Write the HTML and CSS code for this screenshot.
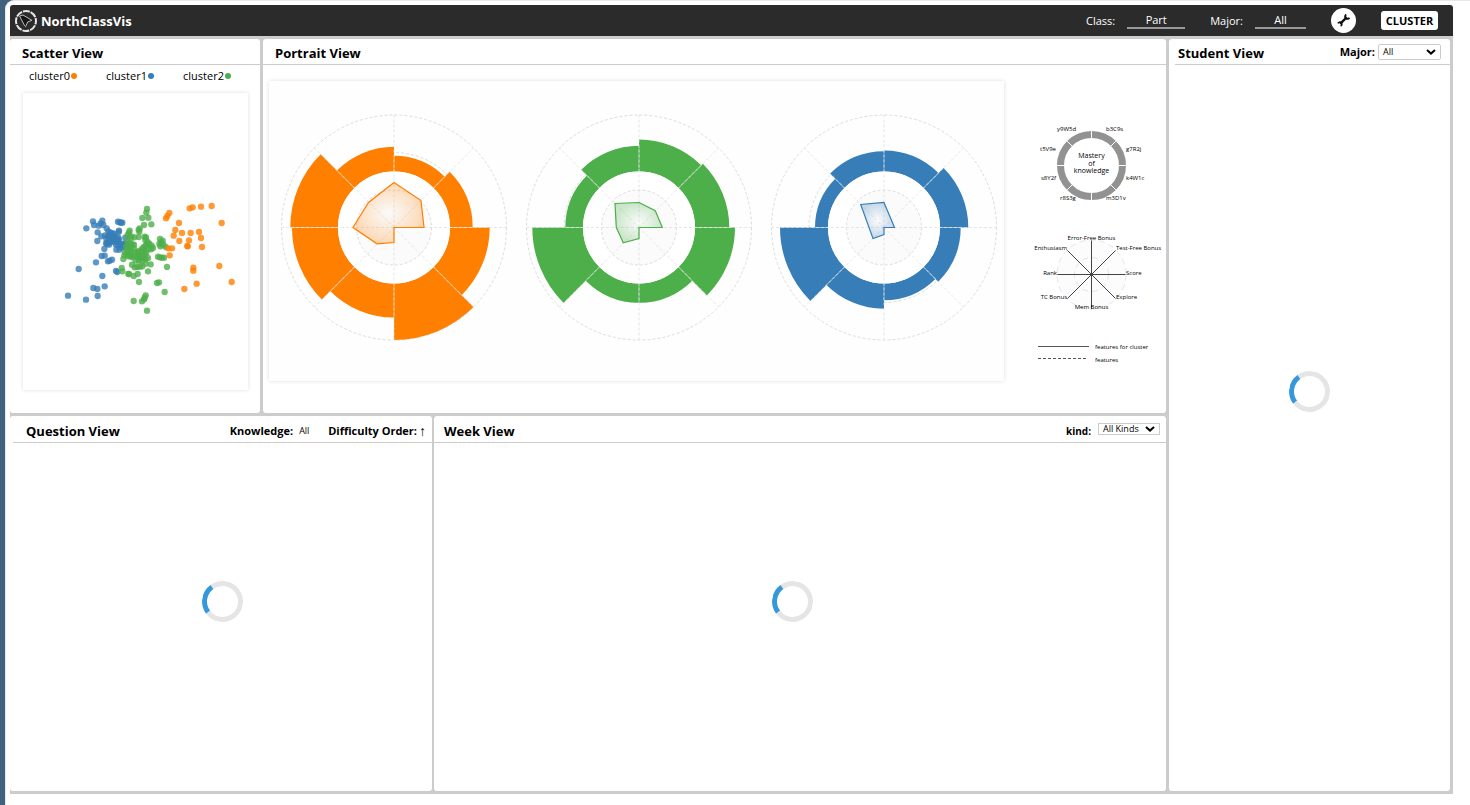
FILE: index.html
```html
<!DOCTYPE html>
<html lang="en">
<head>
<meta charset="utf-8">
<title>NorthClassVis</title>
<link rel="stylesheet" href="styles.css">
</head>
<body>
<div class="window">
  <header class="topbar">
    <svg class="logo" viewBox="0 0 24 24" aria-hidden="true">
      <circle cx="12" cy="12" r="10" fill="none" stroke="#e6e6e6" stroke-width="2" stroke-dasharray="6.9 0.954" stroke-dashoffset="3.4"/>
      <path d="M5.6 7 9 6 18 11.4 13.8 12.8 11.6 17.6 10.6 16.8Z" fill="#151515" stroke="#bbb" stroke-width="1" stroke-linejoin="round"/>
    </svg>
    <h1 class="brand">NorthClassVis</h1>
    <label class="bar-label" for="class">Class:</label>
    <select class="bar-select bar-select-wide" id="class"><option>Part</option></select>
    <label class="bar-label" for="major">Major:</label>
    <select class="bar-select" id="major"><option>All</option></select>
    <button class="tool" type="button" aria-label="Settings">
      <svg viewBox="0 0 24 24" aria-hidden="true" fill="none" stroke="#111">
        <path d="M6.5 17.5 17.5 6.5" stroke-width="3.8"/>
        <path d="M16.4 2.6A3.7 3.7 0 1 0 21.4 7.6" stroke-width="2.8"/>
        <path d="M7.4 20.8A3.2 3.2 0 1 0 3.2 16.6" stroke-width="2.6"/>
      </svg>
    </button>
    <button class="cluster-btn" type="button">CLUSTER</button>
  </header>

  <main class="board">
    <div class="left">
      <div class="row row-top">
        <section class="panel scatter">
          <div class="head"><h2>Scatter View</h2></div>
          <ul class="legend">
            <li>cluster0<i class="dot orange"></i></li>
            <li>cluster1<i class="dot blue"></i></li>
            <li>cluster2<i class="dot green"></i></li>
          </ul>
          <svg class="card" id="scatter" viewBox="-96 -306 675 891"></svg>
        </section>
        <section class="panel portrait">
          <div class="head"><h2>Portrait View</h2></div>
          <div class="charts">
            <svg class="card roses" id="roses" viewBox="0 0 735 300"></svg>
            <svg class="guide" viewBox="0 0 162 300">
              <circle cx="87.5" cy="84.5" r="31" fill="none" stroke="#929292" stroke-width="7"/>
              <g stroke="#fff" id="ring-gaps"></g>
              <g class="guide-title">
                <text x="87.5" y="77">Mastery</text><text x="87.5" y="85">of</text><text x="87.5" y="92">knowledge</text>
              </g>
              <g class="guide-text">
                <text x="53" y="50">y9W5d</text><text x="102" y="50">b3C9s</text>
                <text x="36" y="70">t5V9e</text><text x="122" y="70">g7R2j</text>
                <text x="37" y="99">s8Y2f</text><text x="122" y="99">k4W1c</text>
                <text x="56" y="119">r8S3g</text><text x="102" y="119">m3D1v</text>
              </g>
              <g fill="none" stroke="#d8d8d8" stroke-width="0.7" stroke-dasharray="6 4">
                <circle cx="87.5" cy="193.5" r="34.5" fill="#fcfcfc"/><circle cx="87.5" cy="193.5" r="17"/>
              </g>
              <g stroke="#444" id="spokes"></g>
              <g class="guide-text">
                <text class="mid" x="87.5" y="159">Error-Free Bonus</text>
                <text class="end" x="63" y="169">Enthusiasm</text><text x="112" y="169">Test-Free Bonus</text>
                <text class="end" x="53" y="194">Rank</text><text x="122" y="194">Score</text>
                <text class="end" x="63" y="218">TC Bonus</text><text x="112" y="218">Explore</text>
                <text class="mid" x="87.5" y="228">Mem Bonus</text>
                <text x="91" y="268">features for cluster</text><text x="91" y="281">features</text>
              </g>
              <path d="M34 265.5H85" stroke="#555"/>
              <path d="M34 277.5H83" stroke="#555" stroke-dasharray="3 2"/>
            </svg>
          </div>
        </section>
      </div>
      <div class="row row-bottom">
        <section class="panel question">
          <div class="head">
            <h2>Question View</h2>
            <label class="small-label" for="knowledge">Knowledge:</label>
            <select class="plain-select" id="knowledge"><option>All</option></select>
            <span class="small-label">Difficulty Order:</span>
            <button class="order" type="button" aria-label="Ascending">↑</button>
          </div>
          <div class="loading"><div class="spinner"></div></div>
        </section>
        <section class="panel week">
          <div class="head">
            <h2>Week View</h2>
            <label class="tiny-label" for="kind">kind:</label>
            <select class="box-select kind-select" id="kind"><option>All Kinds</option></select>
          </div>
          <div class="loading"><div class="spinner"></div></div>
        </section>
      </div>
    </div>
    <section class="panel student">
      <div class="head">
        <h2>Student View</h2>
        <label class="major-label" for="student-major">Major:</label>
        <select class="box-select major-select" id="student-major"><option>All</option></select>
      </div>
      <div class="loading"><div class="spinner"></div></div>
    </section>
  </main>
</div>
<script src="charts.js"></script>
</body>
</html>
```
FILE: styles.css
```css
* { box-sizing: border-box; }
body {
  margin: 0;
  background: #40627f;
  color: #000;
  font-family: "Open Sans", "Noto Sans", sans-serif;
  font-size: 12px;
}
h1, h2, ul { margin: 0; padding: 0; }
button, select { font-family: inherit; margin: 0; }

.window {
  display: flex;
  flex-direction: column;
  min-height: 100vh;
  margin-left: 5px;
  padding: 4px 17px 11px 4px;
  background: #fff;
  border-top: 1px solid #e3e9ee;
  border-left: 1px solid #e3e9ee;
  border-top-left-radius: 9px;
}

.topbar {
  display: flex;
  align-items: center;
  height: 31px;
  padding: 0 15px 0 4px;
  background: #2b2b2b;
  color: #fff;
  border-radius: 3px 3px 0 0;
}
.logo { width: 24px; height: 24px; margin-right: 3px; }
.brand { margin-right: auto; font-size: 13px; line-height: 20px; }
.bar-label { font-size: 11px; line-height: 20px; }
.bar-select {
  appearance: none;
  width: 51px;
  height: 16px;
  margin: 0 25px 0 12px;
  padding: 0;
  border: 0;
  border-bottom: 2px solid #999;
  background: none;
  color: #fff;
  font-size: 11px;
  line-height: 14px;
  text-align: center;
  text-align-last: center;
}
.bar-select-wide { width: 58px; }
.tool {
  width: 25px;
  height: 25px;
  margin-right: 25px;
  padding: 5px;
  border: 0;
  border-radius: 50%;
  background: #fff;
}
.tool svg { display: block; width: 15px; height: 15px; }
.cluster-btn {
  width: 57px;
  height: 19px;
  padding: 0;
  border: 0;
  border-radius: 3px;
  background: #fff;
  color: #000;
  font-size: 11px;
  font-weight: 700;
  line-height: 19px;
}

.board {
  flex: 1;
  display: grid;
  grid-template-columns: 1156fr 281fr;
  gap: 3px;
  padding: 3px 3px 3px 0;
  background: #ccc;
}
.left { display: grid; grid-template-rows: 374fr 375fr; gap: 3px; }
.row { display: grid; gap: 3px; }
.row-top { grid-template-columns: 250fr 903fr; }
.row-bottom { grid-template-columns: 422fr 732fr; gap: 2px; }
.panel {
  display: flex;
  flex-direction: column;
  min-width: 0;
  background: #fff;
  border-radius: 3px;
}

.head {
  display: flex;
  align-items: center;
  height: 26px;
  padding-left: 12px;
  border-bottom: 1px solid #ccc;
}
.head h2 { margin-right: auto; padding-top: 2px; font-size: 13px; line-height: 18px; }
.question .head, .week .head { height: 27px; }
.question h2, .week h2 { padding-top: 0; }
.question .head { margin-left: 3px; padding: 3px 6px 0 13px; }
.week .head { padding: 3px 6px 0 10px; }
.student .head { margin-left: 6px; padding: 0 9px 0 3px; }

.legend {
  display: flex;
  justify-content: space-between;
  align-items: center;
  height: 28px;
  padding: 0 29px 7px 19px;
  list-style: none;
  font-size: 11px;
}
.legend li { display: flex; align-items: center; gap: 1px; }
.dot { width: 6px; height: 6px; border-radius: 50%; }
.orange { background: #ff7f00; }
.blue { background: #377eb8; }
.green { background: #4daf4a; }

.card { display: block; background: #fff; box-shadow: 0 0 4px #ddd; }
.scatter .card { margin: 0 12px 0 13px; }
.charts { display: flex; padding: 16px 0 0 6px; }
.roses { flex: 735; min-width: 0; background: #fefefe; }
.guide { flex: 162; min-width: 0; }
.guide-text { font-size: 6px; }
.guide-title { font-size: 7px; text-anchor: middle; }
.mid { text-anchor: middle; }
.end { text-anchor: end; }

.small-label { font-size: 11px; font-weight: 700; }
.tiny-label { margin-right: 7px; font-size: 10px; font-weight: 700; }
.major-label { margin-right: 3px; font-size: 11px; font-weight: 700; line-height: 16px; }
.plain-select {
  appearance: none;
  width: 12px;
  margin: 0 17px 0 6px;
  padding: 0;
  border: 0;
  background: none;
  font-size: 9px;
}
.order {
  padding: 0;
  margin-left: 2px;
  border: 0;
  background: none;
  font-size: 14px;
  line-height: 16px;
}
.box-select {
  appearance: none;
  padding: 0 4px;
  border: 1px solid #ccc;
  background: #fff url("data:image/svg+xml,%3Csvg xmlns='http://www.w3.org/2000/svg' viewBox='0 0 10 6'%3E%3Cpath d='M1 1 5 4.6 9 1' fill='none' stroke='%23000' stroke-width='2'/%3E%3C/svg%3E") no-repeat right 4px center / 10px 6px;
  color: #000;
  font-size: 9px;
}
.major-select { width: 63px; height: 16px; border-radius: 2px; line-height: 14px; }
.kind-select { width: 62px; height: 12px; margin-bottom: 3px; line-height: 10px; }

.loading { flex: 1; display: flex; align-items: center; justify-content: center; padding-bottom: 32px; }
.question .loading { padding-left: 3px; }
.week .loading { padding-right: 15px; }
.student .loading { padding-bottom: 73px; }
.spinner {
  width: 41px;
  height: 41px;
  border: 5px solid #e5e5e5;
  border-left-color: #3498db;
  border-radius: 50%;
  transform: rotate(9deg);
}
```
FILE: charts.js
```js
const NS = "http://www.w3.org/2000/svg";
function add(parent, tag, attrs) {
  const el = document.createElementNS(NS, tag);
  for (const key in attrs) el.setAttribute(key, attrs[key]);
  parent.appendChild(el);
  return el;
}
function polar(r, eighth) {
  const a = eighth * Math.PI / 4;
  return [r * Math.sin(a), -r * Math.cos(a)];
}

const clusters = [
  ["#377eb8", "94,100 114,79 117,90 142,77 137,85 131,92 145,90 155,100 128,112 139,124 127,138 148,162 140,183 149,182 123,202 171,194 164,197 159,199 71,222 183,228 187,231 142,243 115,279 127,282 149,274 128,303 39,302 93,314 189,80 194,82 198,83 202,83 192,107 191,111 160,109 166,112 172,115 178,116 150,121 158,124 165,123 171,127 177,124 183,127 190,128 154,132 163,134 170,133 178,135 186,134 192,133 157,142 164,143 172,140 180,141 189,141 156,147 162,149 183,149 190,151 197,149 203,155 184,164 193,164 200,158 211,128 209,145 213,148 168,118 176,129 153,145 202,147"],
  ["#4daf4a", "276,42 274,53 262,69 280,68 267,90 289,88 254,100 251,105 224,107 222,113 218,120 229,124 227,131 238,127 251,126 269,125 273,127 271,135 253,110 216,138 225,145 232,148 237,149 221,152 214,155 226,158 237,162 219,164 228,168 210,173 217,178 229,176 208,181 205,192 226,184 232,187 239,182 217,169 219,184 245,171 249,175 254,167 262,160 267,156 272,153 258,170 269,170 274,174 253,182 261,183 268,180 247,187 255,190 264,190 272,192 279,189 242,197 252,197 261,198 272,206 287,208 231,209 239,217 247,216 255,215 262,214 200,219 202,229 220,237 222,237 236,243 248,237 279,229 252,261 275,145 283,146 290,152 294,159 288,163 280,161 278,141 315,132 323,137 318,142 313,147 316,154 325,149 332,156 309,185 315,187 321,188 327,188 336,216 306,264 312,262 329,291 272,301 269,308 267,313 261,319 236,318 276,347"],
  ["#ff7f00", "333,70 337,63 343,54 404,40 413,37 438,35 470,33 500,84 372,84 361,105 356,122 381,114 407,114 432,111 438,129 402,136 373,138 397,153 398,154 441,156 340,160 351,160 344,181 415,218 415,227 493,213 530,261 425,266 388,282"]
];
const scatter = document.getElementById("scatter");
for (const [color, points] of clusters) {
  for (const p of points.split(" ")) {
    const [cx, cy] = p.split(",");
    add(scatter, "circle", { cx, cy, r: 9.5, fill: color, "fill-opacity": 0.8 });
  }
}

const INNER = 56, OUTER = 112.5;
const roses = [
  { x: 125, color: "#ff7f00", bars: [71.7, 78.7, 95.7, 112.5, 90, 102, 103.7, 80.7],
    shape: "0,-45 27,-27 30,0 0,0 0,15 -17,16.3 -41,0 -25.5,-25" },
  { x: 370, color: "#4daf4a", bars: [88, 90.3, 96, 75.3, 75.3, 106.7, 73.7, 81.7],
    shape: "0,-25 16.3,-16.7 23.3,0 0,0 0,11 -15.7,15.3 -22.7,0 -24,-24" },
  { x: 615, color: "#377eb8", bars: [77, 84.3, 76.7, 72.7, 81.3, 104, 69, 76.3],
    shape: "0,-25 10.5,0 0,0 0,7 -11,11 -23.3,-23" }
];
const svg = document.getElementById("roses");
roses.forEach((rose, n) => {
  const gradient = add(svg, "radialGradient", { id: "fade" + n });
  add(gradient, "stop", { offset: 0, "stop-color": rose.color, "stop-opacity": 0 });
  add(gradient, "stop", { offset: 1, "stop-color": rose.color, "stop-opacity": 0.28 });
  const g = add(svg, "g", { transform: `translate(${rose.x} 146.5)` });
  const dash = { fill: "none", stroke: "#ddd", "stroke-dasharray": "3 2" };
  add(g, "circle", { ...dash, r: OUTER });
  add(g, "circle", { ...dash, r: 75 });
  rose.bars.forEach((r, i) => {
    const a = polar(INNER, i), b = polar(r, i), c = polar(r, i + 1), d = polar(INNER, i + 1);
    add(g, "path", { d: `M${a}L${b}A${r} ${r} 0 0 1 ${c}L${d}A${INNER} ${INNER} 0 0 0 ${a}Z`, fill: rose.color });
  });
  add(g, "circle", { r: INNER, fill: "#fff" });
  add(g, "circle", { ...dash, r: 37.5, fill: "#fbfbfb" });
  for (let i = 0; i < 8; i++) {
    const [x, y] = polar(OUTER, i);
    add(g, "line", { x2: x, y2: y, stroke: "#ddd", "stroke-dasharray": "3 2", "stroke-opacity": 0.75 });
    const [x1, y1] = polar(INNER, i), [x2, y2] = polar(Math.min(rose.bars[i], rose.bars[(i + 7) % 8]), i);
    add(g, "line", { x1, y1, x2, y2, stroke: "#fff", "stroke-opacity": 0.35 });
  }
  add(g, "polygon", { points: rose.shape, fill: `url(#fade${n})`, stroke: rose.color, "stroke-width": 1.2 });
});

for (let i = 0; i < 8; i++) {
  const [x, y] = polar(36, i), [u, v] = polar(26, i), [s, t] = polar(34, i);
  add(document.getElementById("ring-gaps"), "line", { x1: 87.5 + u, y1: 84.5 + v, x2: 87.5 + x, y2: 84.5 + y });
  add(document.getElementById("spokes"), "line", { x1: 87.5, y1: 193.5, x2: 87.5 + s, y2: 193.5 + t });
}
```
